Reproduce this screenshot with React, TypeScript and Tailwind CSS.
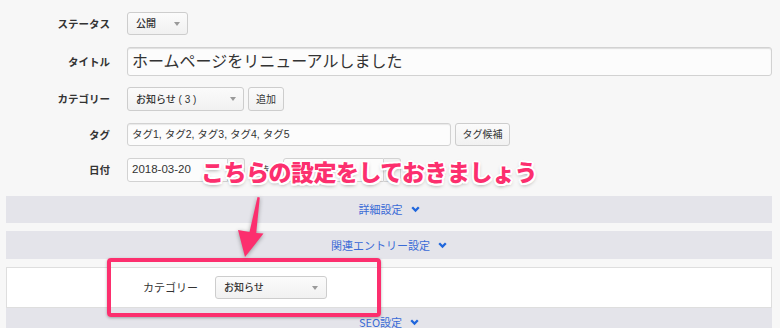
import React from "react";

const FONT = "font-['Liberation_Sans','Noto_Sans_CJK_JP',sans-serif]";

function Tri() {
  return <span className="w-0 h-0 border-x-[3.5px] border-x-transparent border-t-[4px] border-t-[#9a9a9a]" />;
}

function Select({ w, text, pr = 11 }: { w: string; text: string; pr?: number }) {
  return (
    <div
      className={`${w} h-full flex items-center justify-between pl-[8px] border border-[#cdcdcd] rounded-[3px] bg-gradient-to-b from-[#fbfbfb] to-[#f1f1f1] text-[10px] font-medium text-[#333]`}
      style={{ paddingRight: pr - 4 }}
    >
      <span>{text}</span>
      <Tri />
    </div>
  );
}

function Btn({ w, text }: { w: string; text: string }) {
  return (
    <div className={`${w} h-full flex items-center justify-center border border-[#cdcdcd] rounded-[3px] bg-gradient-to-b from-[#fbfbfb] to-[#f1f1f1] text-[10px] text-[#333]`}>
      {text}
    </div>
  );
}

function Label({ children }: { children: React.ReactNode }) {
  return (
    <div className="w-[110px] shrink-0 text-right text-[10.5px] font-bold text-[#333] font-['Noto_Sans_CJK_JP',sans-serif]">
      {children}
    </div>
  );
}

function Chevron() {
  return (
    <svg width="9" height="7" viewBox="0 0 9 7" className="ml-[8px]">
      <polyline points="1.2,1.3 4.5,4.6 7.8,1.3" fill="none" stroke="#1f66dc" strokeWidth="2.3" strokeLinejoin="miter" />
    </svg>
  );
}

function Panel({ h, text }: { h: string; text: string }) {
  return (
    <div className={`${h} ml-[6px] w-[766px] bg-[#e4e4ea] flex items-center justify-center`}>
      <span className="text-[11px] text-[#3a6ad6] font-['Noto_Sans_CJK_JP',sans-serif]">{text}</span>
      <Chevron />
    </div>
  );
}

export default function App() {
  return (
    <div className={`relative w-[780px] h-[328px] bg-[#f7f7f7] overflow-hidden ${FONT}`}>
      <div className="flex flex-col pt-[12px]">
        <div className="flex items-center h-[23px]">
          <Label>ステータス</Label>
          <div className="ml-[17px] h-full flex">
            <Select w="w-[61px]" text="公開" />
          </div>
        </div>

        <div className="flex items-center h-[29px] mt-[12px]">
          <Label>タイトル</Label>
          <div className="ml-[17px] h-full w-[645px] border border-[#d2d2d2] rounded-[3px] bg-[#fcfcfc] shadow-[inset_0_1px_1px_rgba(0,0,0,0.12)] flex items-center pl-[4px] text-[16px] text-[#333]">
            ホームページをリニューアルしました
          </div>
        </div>

        <div className="flex items-center h-[24px] mt-[11px]">
          <Label>カテゴリー</Label>
          <div className="ml-[17px] h-full flex gap-[4px]">
            <Select w="w-[117px]" text="お知らせ ( 3 )" />
            <Btn w="w-[36px]" text="追加" />
          </div>
        </div>

        <div className="flex items-center h-[23px] mt-[12px]">
          <Label>タグ</Label>
          <div className="ml-[17px] h-full flex gap-[4px]">
            <div className="w-[324px] h-full border border-[#d2d2d2] rounded-[3px] bg-[#fcfcfc] shadow-[inset_0_1px_1px_rgba(0,0,0,0.08)] flex items-center pl-[4px] text-[10.5px] text-[#333]">
              タグ1, タグ2, タグ3, タグ4, タグ5
            </div>
            <Btn w="w-[55px]" text="タグ候補" />
          </div>
        </div>

        <div className="flex items-center h-[24px] mt-[12px]">
          <Label>日付</Label>
          <div className="ml-[17px] h-full flex items-center">
            <div className="w-[101px] h-full border border-[#d2d2d2] rounded-l-[3px] bg-[#fcfcfc] flex items-center pl-[4px] text-[11.5px] text-[#333]">
              2018-03-20
            </div>
            <div className="w-[17px] h-full border border-l-0 border-[#d2d2d2] rounded-r-[3px] bg-[#f3f3f3]" />
            <span className="ml-[14px] text-[10px] text-[#555]">時</span>
            <div className="ml-[14px] w-[101px] h-full border border-[#d2d2d2] rounded-l-[3px] bg-[#fcfcfc]" />
            <div className="w-[17px] h-full border border-l-0 border-[#d2d2d2] rounded-r-[3px] bg-[#f3f3f3]" />
          </div>
        </div>

        <div className="mt-[14px]">
          <Panel h="h-[27px]" text="詳細設定" />
        </div>
        <div className="mt-[8px]">
          <Panel h="h-[28px]" text="関連エントリー設定" />
        </div>

        <div className="mt-[8px] ml-[6px] w-[766px] h-[41px] bg-white border border-[#dedede] flex items-center">
          <div className="w-[191px] shrink-0 text-right text-[11px] text-[#333] font-['Noto_Sans_CJK_JP',sans-serif]">カテゴリー</div>
          <div className="ml-[17px] h-[23px] flex">
            <Select w="w-[112px]" text="お知らせ" pr={12} />
          </div>
        </div>

        <div className="ml-[6px] w-[766px] h-[30px] bg-[#e4e4ea] flex items-start justify-center pt-[6px]">
          <span className="text-[11px] leading-[16px] text-[#3a6ad6] font-['Noto_Sans_CJK_JP',sans-serif]">SEO設定</span>
          <div className="h-[16px] flex items-center">
            <Chevron />
          </div>
        </div>
      </div>

      {/* annotation overlay */}
      <div className="absolute left-[107px] top-[258px] w-[274px] h-[59px] border-[4px] border-[#fc2f6e] rounded-[4px] shadow-[0_1px_3px_rgba(0,0,0,0.3)]" />

      <svg className="absolute left-0 top-0 pointer-events-none drop-shadow-[0_1px_2px_rgba(0,0,0,0.35)]" width="780" height="328" viewBox="0 0 780 328">
        <polygon
          points="257.5,197 259.8,197.6 256.2,233 263.5,233.5 245,257 238,230 249.5,232"
          fill="#fc2f6e"
        />
      </svg>

      <div className="absolute left-[201px] top-[160px] whitespace-nowrap text-[23px] leading-none tracking-[-0.5px] font-black text-[#fc2f6e] font-['Noto_Sans_CJK_JP',sans-serif] [text-shadow:2px_0_0_#fff,-2px_0_0_#fff,0_2px_0_#fff,0_-2px_0_#fff,1.5px_1.5px_0_#fff,-1.5px_-1.5px_0_#fff,1.5px_-1.5px_0_#fff,-1.5px_1.5px_0_#fff,0_2px_4px_rgba(0,0,0,0.45)]">
        こちらの設定をしておきましょう
      </div>
    </div>
  );
}
